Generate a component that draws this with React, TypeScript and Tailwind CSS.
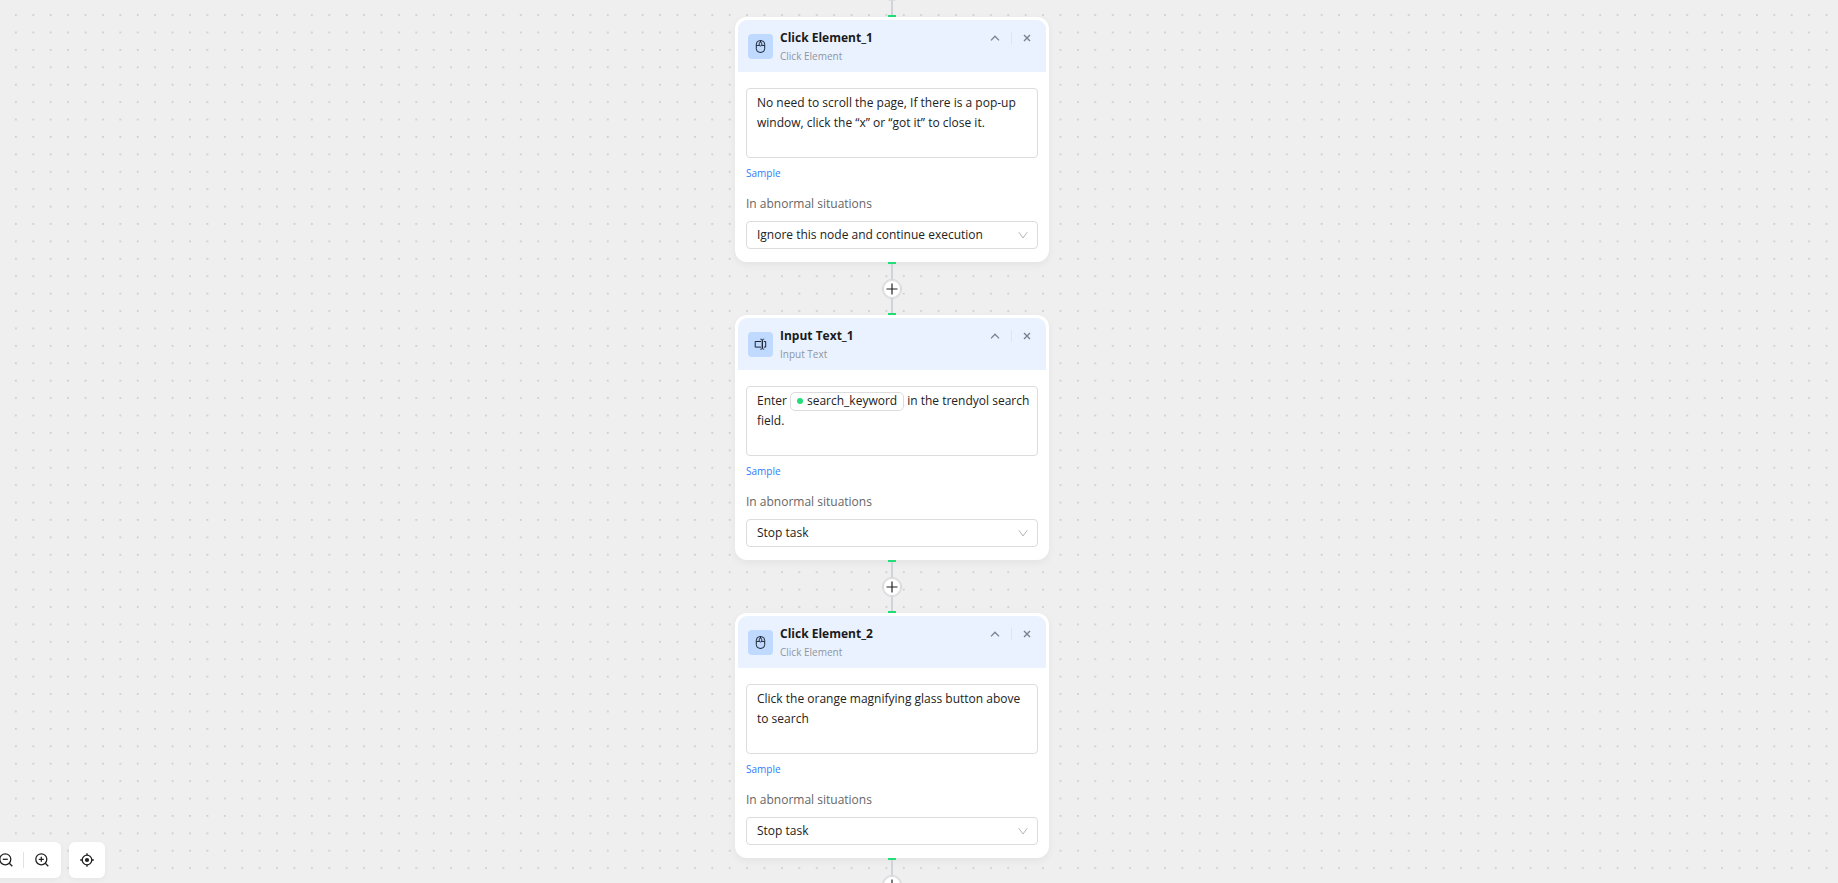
import React from "react";
import clsx from "clsx";

type NodeKind = "click" | "input";

interface IFlowNode {
  id: string;
  kind: NodeKind;
  title: string;
  subtitle: string;
  prompt?: string;
  onError: string;
}

const errorOptions = ["Ignore this node and continue execution", "Stop task"];

const flowNodes: IFlowNode[] = [
  {
    id: "click-1",
    kind: "click",
    title: "Click Element_1",
    subtitle: "Click Element",
    prompt:
      "No need to scroll the page, If there is a pop-up window, click the “x” or “got it” to close it.",
    onError: errorOptions[0],
  },
  {
    id: "input-1",
    kind: "input",
    title: "Input Text_1",
    subtitle: "Input Text",
    onError: errorOptions[1],
  },
  {
    id: "click-2",
    kind: "click",
    title: "Click Element_2",
    subtitle: "Click Element",
    prompt: "Click the orange magnifying glass button above to search",
    onError: errorOptions[1],
  },
];

const MouseIcon = () => (
  <svg width="13" height="13" viewBox="0 0 13 13" fill="none" stroke="#1c2433">
    <rect x="2.3" y="0.6" width="8.4" height="11.8" rx="3.7" />
    <path d="M2.3 5.4h3M7.7 5.4h3M6.5 0.6v1.6" />
    <rect x="5.3" y="2.2" width="2.4" height="3.8" rx="1.2" />
  </svg>
);

const InputIcon = () => (
  <svg width="13" height="13" viewBox="0 0 13 13" fill="none" stroke="#1c2433">
    <path d="M7 3.5H1.2v5.6H7M9.8 3.5h1.9v5.6H9.8" />
    <path d="M6.4 1.2c1.1 0 1.9.3 1.9 1v8c0 .7-.8 1-1.9 1M10.2 1.2c-1.1 0-1.9.3-1.9 1v8c0 .7.8 1 1.9 1" />
  </svg>
);

const DotGrid = () => (
  <svg className="absolute inset-0 w-full h-full" aria-hidden="true">
    <defs>
      <pattern
        id="dots"
        x="7.2"
        y="6.4"
        width="17.41"
        height="17.41"
        patternUnits="userSpaceOnUse"
      >
        <circle cx="8.7" cy="8.7" r="0.6" fill="#91919a" />
      </pattern>
    </defs>
    <rect width="100%" height="100%" fill="url(#dots)" />
  </svg>
);

const Connector = () => (
  <div className="h-[53px] flex flex-col items-center">
    <span className="w-2 h-[2px] bg-[#22dd78]" />
    <span className="w-[2px] flex-1 bg-[#cfd3da]" />
    <button
      type="button"
      aria-label="Add node"
      className="w-5 h-5 rounded-full border-[1px] ring-1 ring-inset ring-[#dcdddf] border-[#d3d4d6] bg-white flex items-center justify-center"
    >
      <svg width="12" height="12" viewBox="0 0 12 12" stroke="#222" fill="none">
        <path d="M6 0.5v11M0.5 6h11" strokeWidth="1.2" />
      </svg>
    </button>
    <span className="w-[2px] flex-1 bg-[#cfd3da]" />
    <span className="w-2 h-[2px] bg-[#22dd78]" />
  </div>
);

const boxStyle =
  "w-full rounded border border-[#dcdcdc] bg-white text-xs text-[#222] outline-none";

const KeywordPrompt = () => (
  <div
    role="textbox"
    aria-label="Input Text_1 prompt"
    aria-multiline="true"
    contentEditable
    suppressContentEditableWarning
    className={clsx(boxStyle, "h-[70px] pl-[10px] pr-1 pt-1 leading-5")}
  >
    <div className="flex items-center gap-[3px] h-5 whitespace-nowrap">
      <span>Enter</span>
      <span className="flex items-center h-[19px] px-[6px] gap-1 rounded-[5px] border border-[#dcdcdc] leading-4">
        <span className="w-[6px] h-[6px] rounded-full bg-[#22dd78]" />
        search_keyword
      </span>
      <span>in the trendyol search</span>
    </div>
    <div>field.</div>
  </div>
);

const FlowCard = ({ node }: { node: IFlowNode }) => {
  return (
    <section className="w-[314px] rounded-xl border-[3px] border-white bg-white shadow-[0_3px_8px_rgba(0,0,0,0.05)]">
      <header className="h-[52px] flex items-start px-[10px] rounded-t-[9px] bg-[#eaf2ff]">
        <div className="w-[25px] h-[25px] mt-[14px] rounded bg-[#bfd9ff] flex items-center justify-center">
          {node.kind === "click" ? <MouseIcon /> : <InputIcon />}
        </div>
        <div className="flex-1 pl-[7px] pt-[9px]">
          <h2 className="text-xs leading-[18px] font-bold text-[#1a1a1a]">
            {node.title}
          </h2>
          <p className="text-[10px] leading-[18px] text-[#8f95a1]">
            {node.subtitle}
          </p>
        </div>
        <div className="flex items-center h-[14px] mt-[11px]">
          <button type="button" aria-label="Collapse" className="p-1">
            <svg width="10" height="8" viewBox="0 0 10 8" fill="none" stroke="#7b818c">
              <path d="M1 6.4l4-4.2 4 4.2" strokeWidth="1.3" />
            </svg>
          </button>
          <span className="w-px h-3 mx-[7px] bg-[#dfe5ee]" />
          <button type="button" aria-label="Remove" className="p-1 mr-px">
            <svg width="8" height="8" viewBox="0 0 8 8" fill="none" stroke="#7b818c">
              <path d="M1 1l6 6M7 1L1 7" strokeWidth="1.4" />
            </svg>
          </button>
        </div>
      </header>

      <div className="px-2 pt-4 pb-[10px]">
        {node.prompt ? (
          <textarea
            aria-label={`${node.title} prompt`}
            defaultValue={node.prompt}
            className={clsx(
              boxStyle,
              "block h-[70px] resize-none pl-[10px] pr-1 pt-1 leading-5"
            )}
          />
        ) : (
          <KeywordPrompt />
        )}
        <a
          href="#sample"
          className="block w-fit mt-[6px] text-[10px] leading-[18px] text-[#2f7bff]"
        >
          Sample
        </a>
        <label
          htmlFor={`${node.id}-error`}
          className="block mt-3 text-xs leading-5 text-[#666]"
        >
          In abnormal situations
        </label>
        <div className="relative mt-[7px]">
          <select
            id={`${node.id}-error`}
            defaultValue={node.onError}
            className={clsx(boxStyle, "block h-7 appearance-none px-[10px]")}
          >
            {errorOptions.map((option) => (
              <option key={option}>{option}</option>
            ))}
          </select>
          <svg
            className="absolute right-[10px] top-[10px] pointer-events-none"
            width="10"
            height="9"
            viewBox="0 0 10 9"
            fill="none"
            stroke="#b5b5b5"
          >
            <path d="M0.8 1.2L5 7l4.2-5.8" />
          </svg>
        </div>
      </div>
    </section>
  );
};

const ZoomIcon = ({ plus }: { plus?: boolean }) => (
  <svg width="14" height="14" viewBox="0 0 14 14" fill="none" stroke="#222">
    <circle cx="6.3" cy="6.3" r="5.5" strokeWidth="1.3" />
    <path d="M10.3 10.3l3 3" strokeWidth="1.3" />
    <path d={plus ? "M3.8 6.3h5M6.3 3.8v5" : "M3.8 6.3h5"} strokeWidth="1.3" />
  </svg>
);

const LocateIcon = () => (
  <svg width="14" height="14" viewBox="0 0 14 14" fill="none" stroke="#222">
    <circle cx="7" cy="7" r="4.8" strokeWidth="1.3" />
    <circle cx="7" cy="7" r="2.1" fill="#222" stroke="none" />
    <path d="M7 0.2v2.4M7 11.4v2.4M0.2 7h2.4M11.4 7h2.4" strokeWidth="1.3" />
  </svg>
);

const App = () => {
  return (
    <div className="relative h-screen overflow-hidden bg-[#efefef] font-['Open_Sans',sans-serif]">
      <DotGrid />

      <main className="relative flex flex-col items-center pr-[54px] -mt-9">
        {flowNodes.map((node) => (
          <React.Fragment key={node.id}>
            <Connector />
            <FlowCard node={node} />
          </React.Fragment>
        ))}
        <Connector />
      </main>

      {/* zoom controls */}
      <div className="absolute -left-[13px] bottom-[5px] flex gap-2">
        <div className="h-9 px-3 flex items-center rounded-md bg-white shadow-[0_2px_6px_rgba(0,0,0,0.04)]">
          <button type="button" aria-label="Zoom out">
            <ZoomIcon />
          </button>
          <span className="w-px h-4 ml-[10px] mr-[11px] bg-[#e2e2e2]" />
          <button type="button" aria-label="Zoom in">
            <ZoomIcon plus />
          </button>
        </div>
        <button
          type="button"
          aria-label="Center view"
          className="w-9 h-9 flex items-center justify-center rounded-md bg-white shadow-[0_2px_6px_rgba(0,0,0,0.04)]"
        >
          <LocateIcon />
        </button>
      </div>
    </div>
  );
};

export default App;
